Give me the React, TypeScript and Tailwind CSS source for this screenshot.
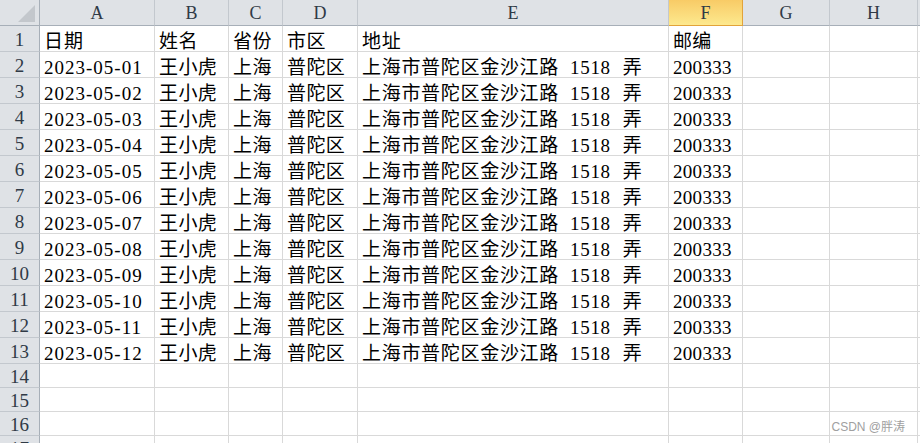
import React from "react";

const cols = ["A", "B", "C", "D", "E", "F", "G", "H", ""];

const header = ["日期", "姓名", "省份", "市区", "地址", "邮编", "", "", ""];

const rows: string[][] = [
  header,
  ...Array.from({ length: 12 }, (_, i) => [
    `2023-05-${String(i + 1).padStart(2, "0")}`,
    "王小虎",
    "上海",
    "普陀区",
    "ADDR",
    "200333",
    "",
    "",
    "",
  ]),
];

const serif = "font-['Liberation_Serif','Noto_Sans_CJK_SC',serif]";

const colText = [
  "tracking-[1px]",
  "tracking-[0.4px]",
  "tracking-[0.4px]",
  "tracking-[0.4px]",
  "tracking-[0.7px]",
  "tracking-[0.3px]",
  "",
  "",
  "",
];

const Address = () => (
  <>
    <span className="tracking-[0.7px]">上海市普陀区金沙江路</span>
    <span className="ml-[11px]">1518</span>
    <span className="ml-[12px]">弄</span>
  </>
);

const App = () => {
  const empty = [14, 15, 16, 17];

  return (
    <div className="relative w-[920px] h-[443px] overflow-hidden bg-white">
      <div
        className={`grid grid-cols-[40px_115px_74px_54px_75px_311px_74px_87px_88px_1fr] ${serif}`}
      >
        {/* corner */}
        <div className="h-[26px] bg-[#dfe2e6] border-r border-b border-[#a7afb8] flex items-end justify-end p-[3px] pr-[4px]">
          <div className="w-[17px] h-[17px] bg-[#c3c7cc] [clip-path:polygon(100%_0,100%_100%,0_100%)]" />
        </div>
        {/* column headers */}
        {cols.map((c, i) =>
          c === "F" ? (
            <div
              key={i}
              className="h-[26px] bg-gradient-to-b from-[#f8cb66] to-[#fde98e] border-r border-b border-[#e2a33a] flex items-center justify-center text-[18px] leading-[18px] text-[#303a46]"
            >
              {c}
            </div>
          ) : (
            <div
              key={i}
              className="h-[26px] bg-[#dfe2e6] border-r border-b border-r-[#c3c8ce] border-b-[#a7afb8] flex items-center justify-center text-[18px] leading-[18px] text-[#303a46]"
            >
              {c}
            </div>
          )
        )}

        {rows.map((r, ri) => (
          <React.Fragment key={ri}>
            <div className="h-[26px] bg-[#dfe2e6] border-r border-b border-r-[#a7afb8] border-b-[#c3c8ce] flex items-center justify-center text-[19px] leading-[19px] text-[#303a46] pt-[2px]">
              {ri + 1}
            </div>
            {r.map((v, ci) => (
              <div
                key={ci}
                className={`h-[26px] border-r border-b border-[#d9d9d9] pl-[4px] pt-[6px] text-[19px] leading-[19px] text-black whitespace-pre ${colText[ci]}`}
              >
                {v === "ADDR" ? <Address /> : v}
              </div>
            ))}
          </React.Fragment>
        ))}

        {empty.map((n) => (
          <React.Fragment key={n}>
            <div className="h-[24px] bg-[#dfe2e6] border-r border-b border-r-[#a7afb8] border-b-[#c3c8ce] flex items-center justify-center text-[19px] leading-[19px] text-[#303a46] pt-[2px]">
              {n}
            </div>
            {cols.map((_, ci) => (
              <div key={ci} className="h-[24px] border-r border-b border-[#d9d9d9]" />
            ))}
          </React.Fragment>
        ))}
      </div>

      <div className="absolute right-[15px] bottom-[9px] text-[12px] leading-[14px] text-[#a0a0a0] font-['Liberation_Sans','Noto_Sans_CJK_SC',sans-serif]">
        CSDN @胖涛
      </div>
    </div>
  );
};

export default App;
